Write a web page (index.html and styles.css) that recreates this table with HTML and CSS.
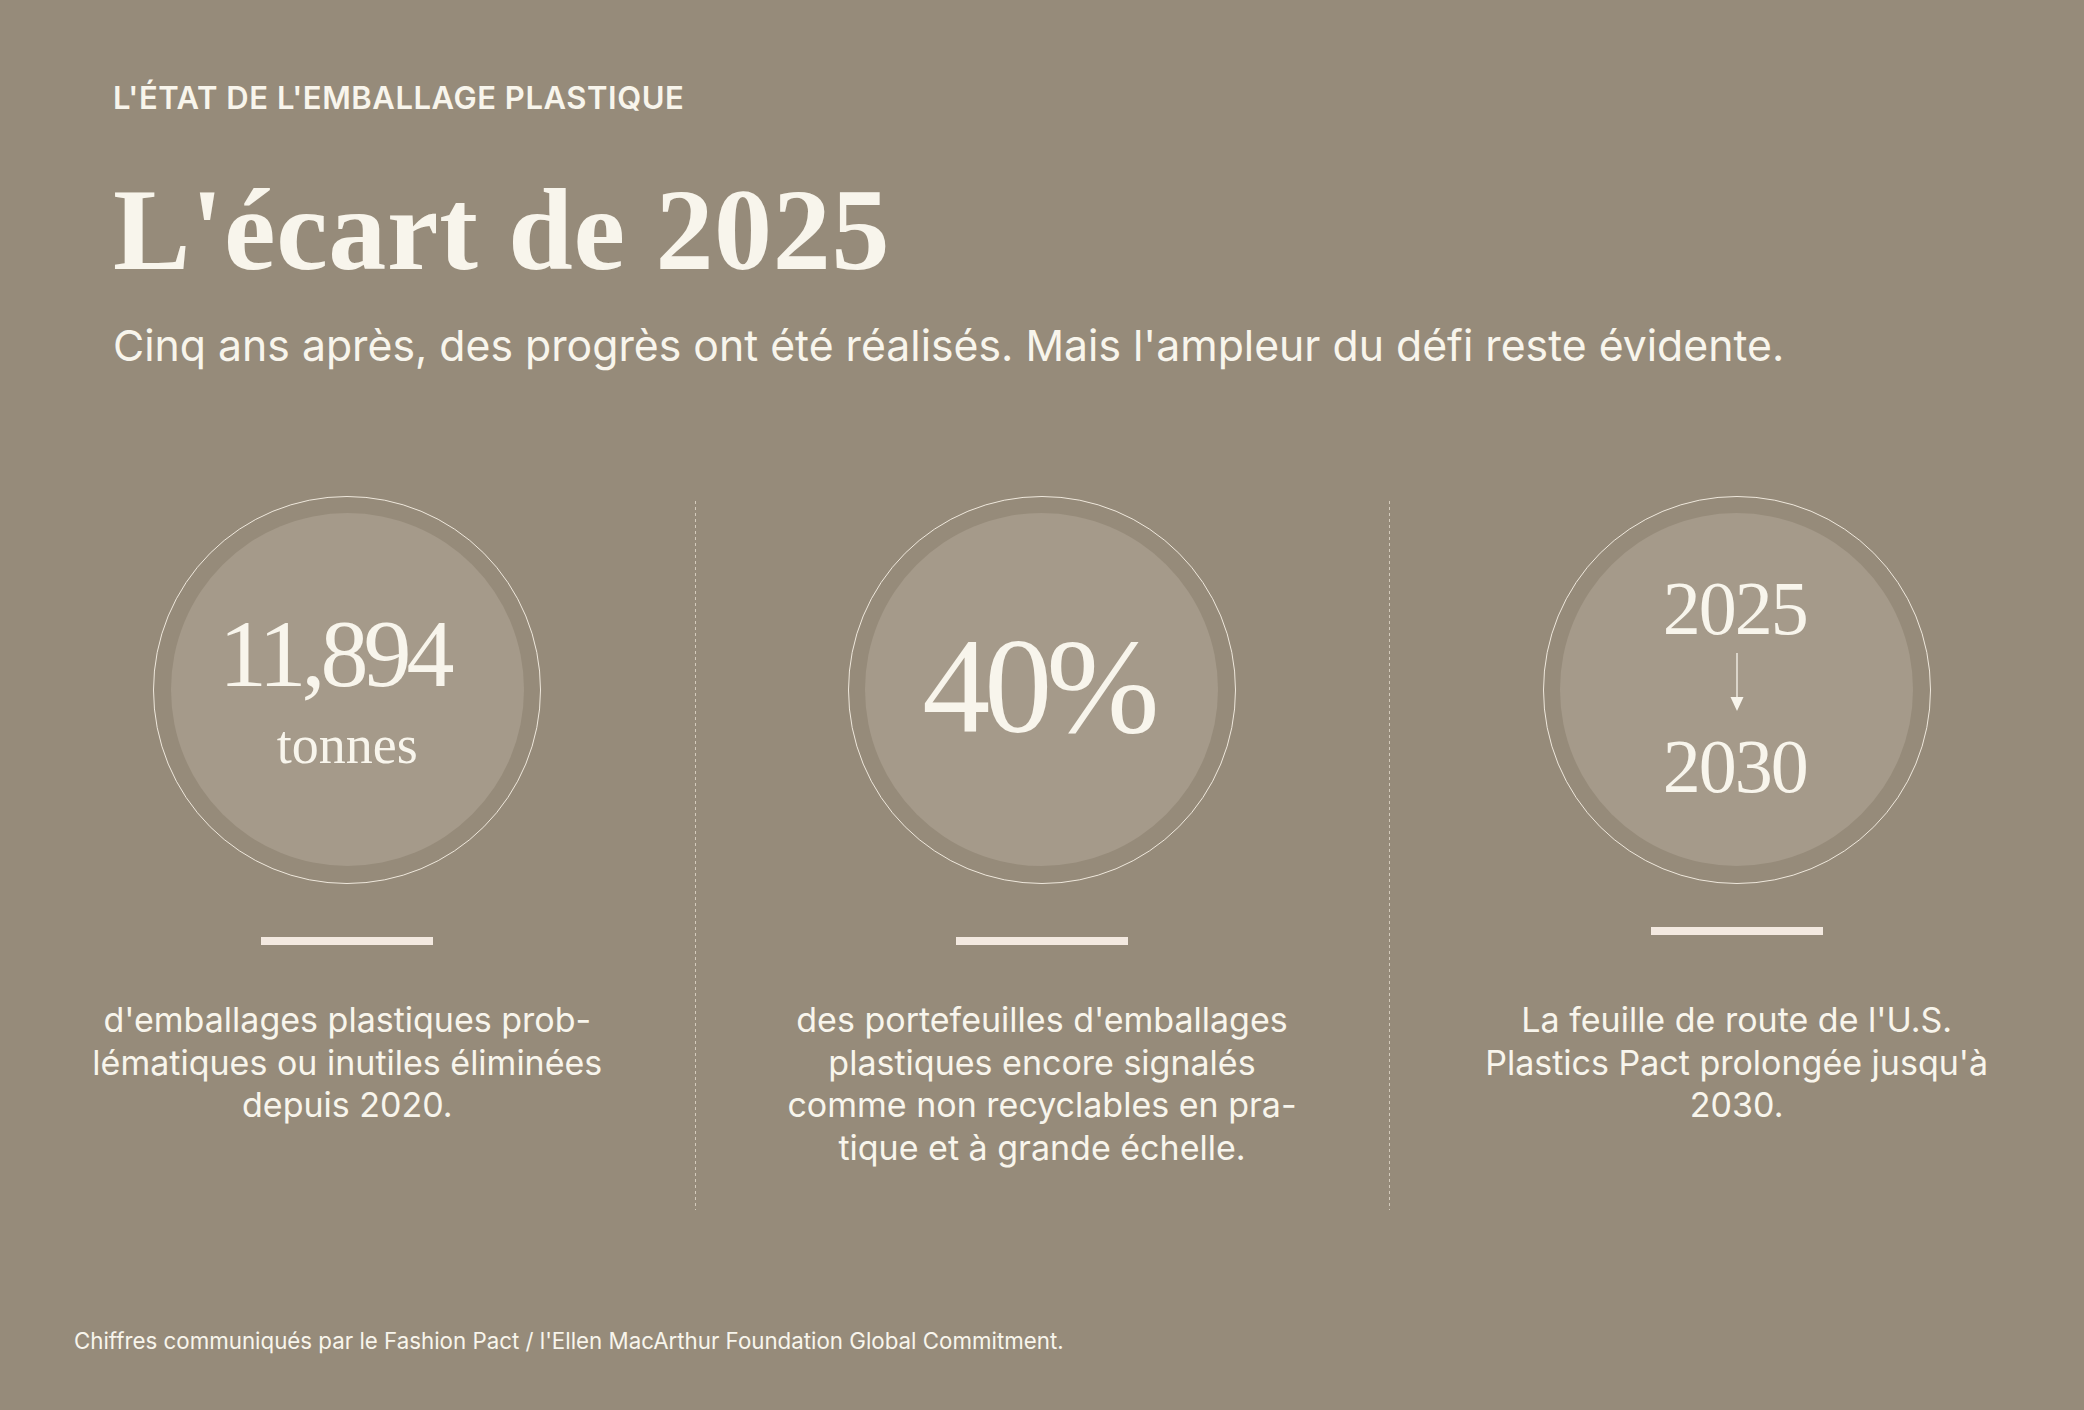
FILE: index.html
```html
<!DOCTYPE html>
<html lang="fr">
<head>
<meta charset="utf-8">
<title>L'écart de 2025</title>
<link rel="stylesheet" href="styles.css">
</head>
<body>
<main class="page">
  <header class="intro">
    <p class="eyebrow">L'ÉTAT DE L'EMBALLAGE PLASTIQUE</p>
    <h1 class="title">L'écart de 2025</h1>
    <p class="subtitle">Cinq ans après, des progrès ont été réalisés. Mais l'ampleur du défi reste évidente.</p>
  </header>

  <section class="stats">
    <article class="stat">
      <div class="ring">
        <div class="disc">
          <div class="figure figure--tonnes">
            <span class="num num--tonnes">11,894</span>
            <span class="unit">tonnes</span>
          </div>
        </div>
      </div>
      <span class="bar"></span>
      <p class="stat-text">d'emballages plastiques prob-<br>lématiques ou inutiles éliminées<br>depuis 2020.</p>
    </article>

    <article class="stat">
      <div class="ring">
        <div class="disc">
          <div class="figure figure--percent">
            <span class="num num--percent">40%</span>
          </div>
        </div>
      </div>
      <span class="bar"></span>
      <p class="stat-text">des portefeuilles d'emballages<br>plastiques encore signalés<br>comme non recyclables en pra-<br>tique et à grande échelle.</p>
    </article>

    <article class="stat stat--roadmap">
      <div class="ring">
        <div class="disc">
          <div class="figure figure--years">
            <span class="num num--year">2025</span>
            <svg class="arrow" width="16" height="58" viewBox="0 0 16 58" aria-hidden="true">
              <line x1="8" y1="0" x2="8" y2="46" stroke="#f8f5ec" stroke-width="1.3"/>
              <polygon points="1.5,44 14.5,44 8,58" fill="#f8f5ec"/>
            </svg>
            <span class="num num--year num--year-end">2030</span>
          </div>
        </div>
      </div>
      <span class="bar"></span>
      <p class="stat-text">La feuille de route de l'U.S.<br>Plastics Pact prolongée jusqu'à<br>2030.</p>
    </article>
  </section>

  <footer class="source">Chiffres communiqués par le Fashion Pact / l'Ellen MacArthur Foundation Global Commitment.</footer>
</main>
</body>
</html>
```
FILE: styles.css
```css
html, body {
  margin: 0;
  padding: 0;
  background: #968b7a;
}

.page {
  width: 2084px;
  height: 1410px;
  overflow: hidden;
  background: #968b7a;
  color: #f8f5ec;
  font-family: "Inter", "Liberation Sans", sans-serif;
}

/* ---------- Intro ---------- */
.intro {
  padding: 81.7px 0 0 113px;
}

.eyebrow {
  margin: 0;
  font-size: 31px;
  line-height: 31px;
  font-weight: 600;
  letter-spacing: 0.55px;
}

.title {
  margin: 59px 0 0;
  font-family: "Liberation Serif", "Times New Roman", serif;
  font-weight: 700;
  font-size: 116px;
  line-height: 116px;
  letter-spacing: 0.7px;
}

.subtitle {
  margin: 37px 0 0;
  font-size: 42.75px;
  line-height: 42.5px;
  font-weight: 400;
}

/* ---------- Stats ---------- */
.stats {
  display: grid;
  grid-template-columns: repeat(3, 1fr);
  margin-top: 128.5px;
}

.stat {
  position: relative;
  display: flex;
  flex-direction: column;
  align-items: center;
  padding-bottom: 41px;
}

.stat + .stat::before {
  content: "";
  position: absolute;
  left: 0;
  top: 5px;
  bottom: 0;
  width: 1px;
  background: repeating-linear-gradient(to bottom, #d3cabb 0 3px, transparent 3px 6px);
}

.ring {
  box-sizing: border-box;
  width: 388px;
  height: 388px;
  border: 1.5px solid #efe8dc;
  border-radius: 50%;
  display: flex;
  align-items: center;
  justify-content: center;
}

.disc {
  width: 353px;
  height: 353px;
  border-radius: 50%;
  background: #a59a8a;
  display: flex;
  align-items: center;
  justify-content: center;
}

.figure {
  display: flex;
  flex-direction: column;
  align-items: center;
  font-family: "Liberation Serif", "Times New Roman", serif;
  font-weight: 400;
  color: #f8f5ec;
}

.figure--tonnes { padding-bottom: 4px; }
.figure--percent { padding-bottom: 7px; }
.figure--years { padding-bottom: 5px; }

.num {
  display: block;
}

.num--tonnes {
  font-size: 96px;
  line-height: 101px;
  letter-spacing: -5px;
  padding-right: 26px;
}

.unit {
  margin-top: 14.4px;
  font-size: 54px;
  line-height: 54px;
}

.num--percent {
  font-size: 136px;
  line-height: 141px;
  letter-spacing: -6px;
  padding-right: 8px;
}

.num--year {
  font-size: 76px;
  line-height: 76px;
  letter-spacing: -2px;
  padding-right: 4px;
}

.arrow {
  display: block;
  margin-top: 6.7px;
}

.num--year-end {
  margin-top: 17.3px;
}

.bar {
  display: block;
  width: 172px;
  height: 8px;
  margin-top: 53px;
  background: #f3e9e0;
}

.stat-text {
  margin: 54.4px 0 0;
  font-size: 34px;
  line-height: 42.5px;
  text-align: center;
  font-weight: 400;
}

.stat--roadmap .bar {
  margin-top: 43px;
}

.stat--roadmap .stat-text {
  margin-top: 64.4px;
}

/* ---------- Footer ---------- */
.source {
  margin-top: 119.5px;
  padding-left: 74px;
  font-size: 22.3px;
  line-height: 22.3px;
}
```
